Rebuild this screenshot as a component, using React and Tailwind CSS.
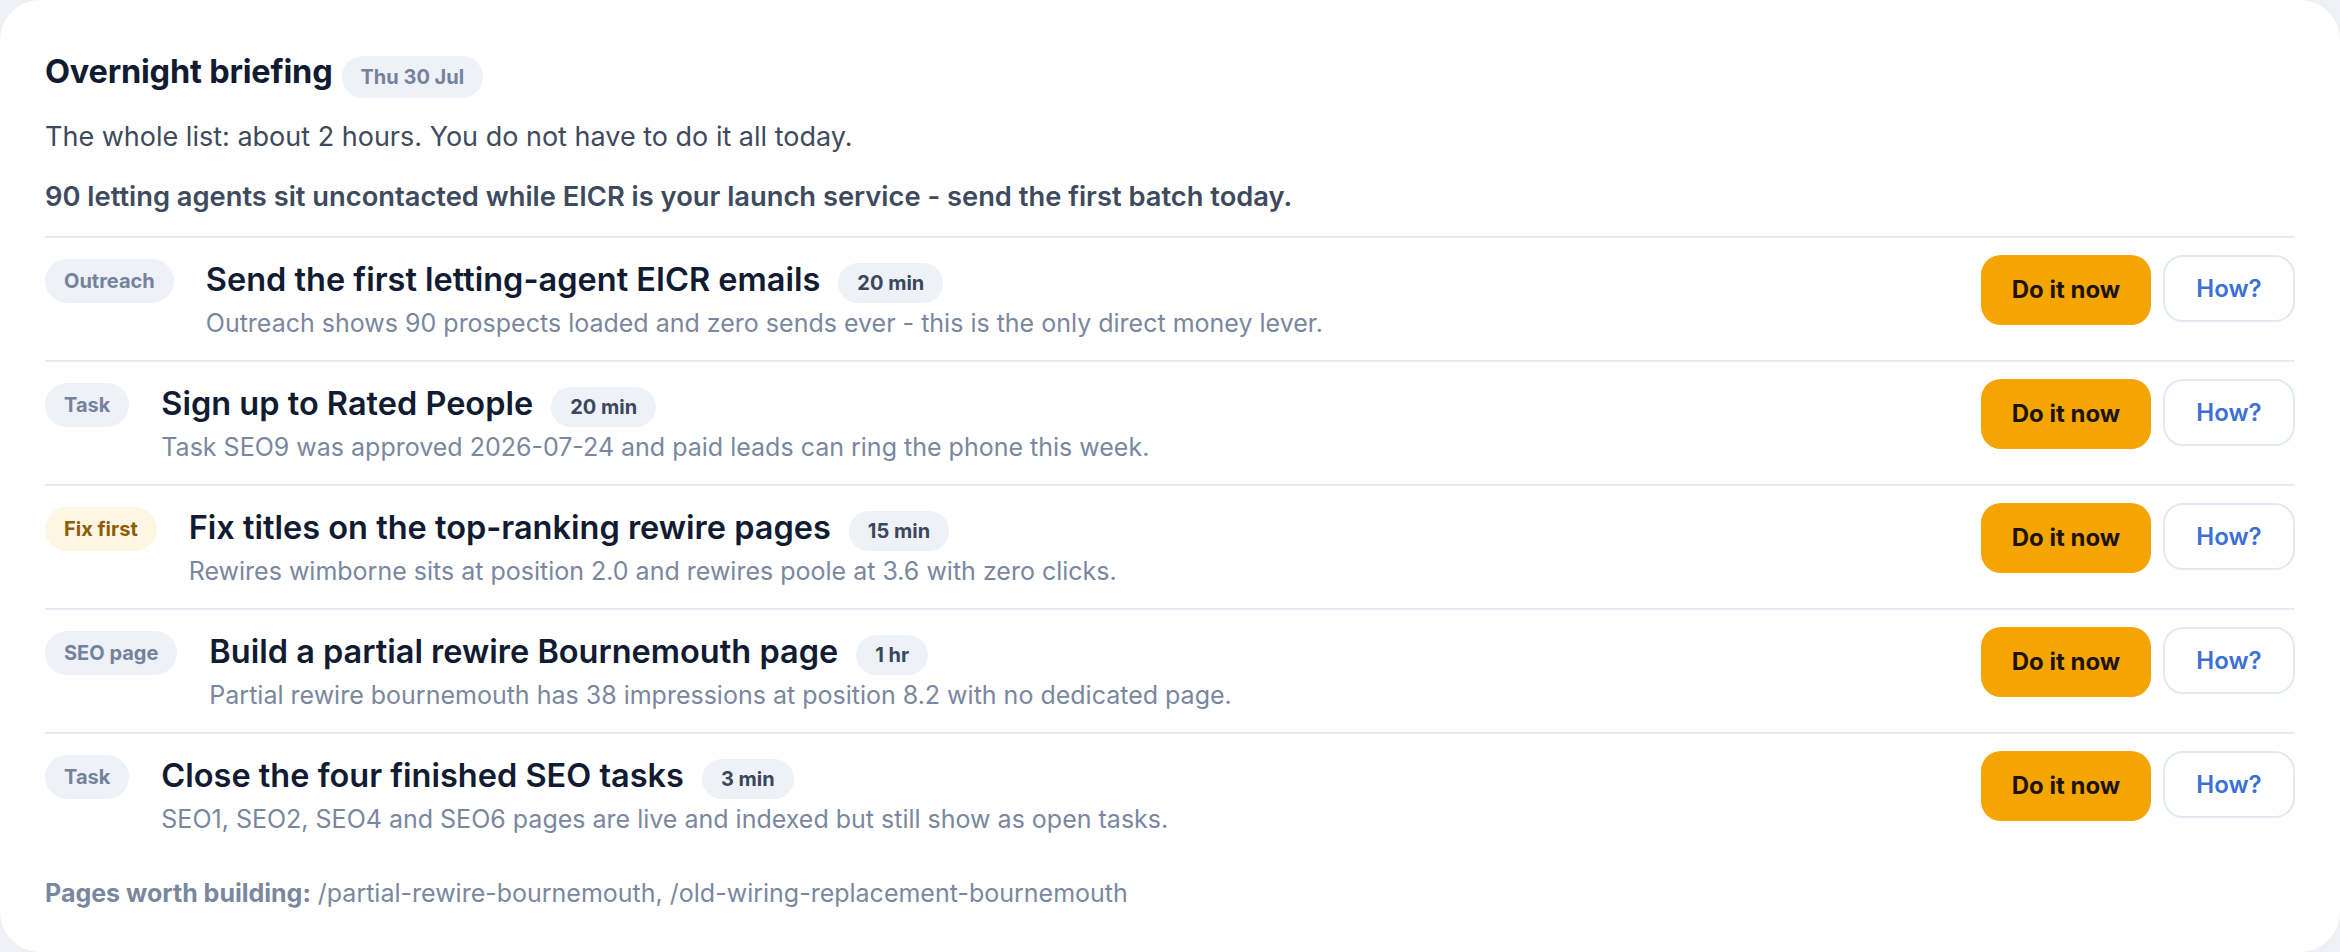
const items = [
  {
    tag: 'Outreach',
    tone: 'gray',
    title: 'Send the first letting-agent EICR emails',
    time: '20 min',
    note: 'Outreach shows 90 prospects loaded and zero sends ever - this is the only direct money lever.',
  },
  {
    tag: 'Task',
    tone: 'gray',
    title: 'Sign up to Rated People',
    time: '20 min',
    note: 'Task SEO9 was approved 2026-07-24 and paid leads can ring the phone this week.',
  },
  {
    tag: 'Fix first',
    tone: 'amber',
    title: 'Fix titles on the top-ranking rewire pages',
    time: '15 min',
    note: 'Rewires wimborne sits at position 2.0 and rewires poole at 3.6 with zero clicks.',
  },
  {
    tag: 'SEO page',
    tone: 'gray',
    title: 'Build a partial rewire Bournemouth page',
    time: '1 hr',
    note: 'Partial rewire bournemouth has 38 impressions at position 8.2 with no dedicated page.',
  },
  {
    tag: 'Task',
    tone: 'gray',
    title: 'Close the four finished SEO tasks',
    time: '3 min',
    note: 'SEO1, SEO2, SEO4 and SEO6 pages are live and indexed but still show as open tasks.',
  },
]

function BriefingRow({ tag, tone, title, time, note }) {
  return (
    <li className="flex items-start justify-between border-t-2 border-[#e6eaf2] pt-[17px] pb-[19px]">
      <div className="flex items-start gap-[32px]">
        <span
          className={`mt-[4px] flex h-[44px] items-center rounded-full px-[19px] text-[20px] font-bold ${
            tone === 'amber' ? 'bg-[#fef6e2] text-[#8d5d05]' : 'bg-[#eef1f7] text-[#74839b]'
          }`}
        >
          {tag}
        </span>
        <div>
          <div className="flex h-[50px] items-center gap-[18px]">
            <h3 className="text-[32.5px] font-semibold text-[#111b32]">{title}</h3>
            <span className="mt-[6px] flex h-[40px] items-center rounded-full bg-[#eef1f7] px-[19px] text-[20px] font-bold text-[#3a475d]">
              {time}
            </span>
          </div>
          <p className="text-[25px] leading-[36px] text-[#7a879e]">{note}</p>
        </div>
      </div>
      <div className="flex items-start gap-[12px]">
        <button className="h-[70px] w-[170px] rounded-[20px] bg-[#f4a502] text-[24px] font-bold text-[#1c1300]">
          Do it now
        </button>
        <button className="h-[67px] w-[132px] rounded-[20px] border-2 border-[#e3e8f2] bg-white text-[24px] font-semibold text-[#3b6fd9]">
          How?
        </button>
      </div>
    </li>
  )
}

export default function App() {
  return (
    <div className="h-[952px] bg-[#eef0f5] font-['Inter','Noto_Sans',sans-serif]">
      <section className="h-full rounded-[40px] bg-white px-[45px] pt-[50px]">
        <div className="flex h-[44px] items-center gap-[9px]">
          <h2 className="text-[32.5px] font-bold tracking-[-0.2px] text-[#111b32]">Overnight briefing</h2>
          <span className="mt-[10px] flex h-[42px] items-center rounded-full bg-[#eef1f7] px-[19px] text-[20px] font-bold text-[#74839b]">
            Thu 30 Jul
          </span>
        </div>
        <p className="mt-[23px] text-[27px] leading-[40px] text-[#3e4a5e]">
          The whole list: about 2 hours. You do not have to do it all today.
        </p>
        <p className="mt-[20px] text-[27.3px] font-semibold leading-[40px] text-[#3e4a5e]">
          90 letting agents sit uncontacted while EICR is your launch service - send the first batch today.
        </p>
        <ul className="mt-[19px]">
          {items.map((item, i) => (
            <BriefingRow key={i} {...item} />
          ))}
        </ul>
        <p className="mt-[19px] text-[25px] leading-[36px] text-[#7a889f]">
          <span className="font-bold">Pages worth building:</span> /partial-rewire-bournemouth, /old-wiring-replacement-bournemouth
        </p>
      </section>
    </div>
  )
}
